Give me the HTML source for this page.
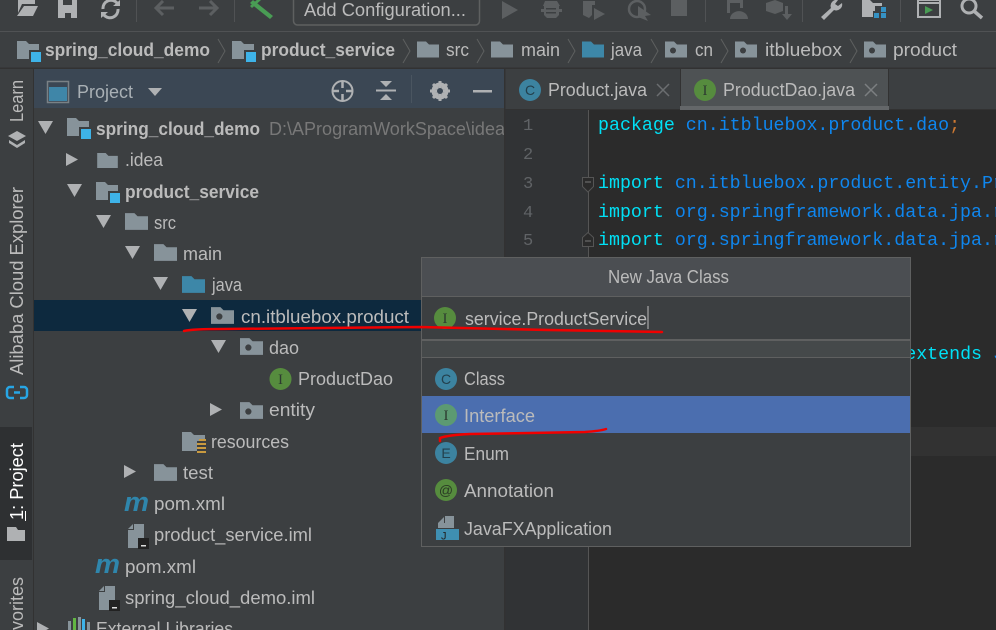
<!DOCTYPE html>
<html><head><meta charset="utf-8"><title>New Java Class</title>
<style>
html,body{margin:0;padding:0;width:996px;height:630px;overflow:hidden;background:#3c3f41}
svg{display:block}
text{font-family:"Liberation Sans",sans-serif;font-size:18px;fill:#bbbbbb}
.b{font-weight:bold}
.c{font-family:"Liberation Mono",monospace;font-size:18.3px}
.k{fill:#00e0f5}.n{fill:#0f86ee}
.ln{font-family:"Liberation Mono",monospace;font-size:17px;fill:#606366}
.g{font-family:"Liberation Serif",serif;font-size:15px;text-anchor:middle;fill:#2d3b30}
.gs{font-family:"Liberation Sans",sans-serif;font-size:14px;text-anchor:middle;fill:#23404d}
.m{font-weight:bold;font-style:italic;font-size:27px;fill:#2f86ac}
</style></head><body>
<svg width="996" height="630" viewBox="0 0 996 630" xmlns="http://www.w3.org/2000/svg">
<defs>
<symbol id="f" viewBox="0 0 22 16" overflow="visible"><path d="M0 0h9l3 3h10v13H0z" fill="#87939a"/></symbol>
<symbol id="fb" viewBox="0 0 22 16" overflow="visible"><path d="M0 0h9l3 3h10v13H0z" fill="#3d87a8"/></symbol>
<symbol id="p" viewBox="0 0 22 16" overflow="visible"><path d="M0 0h9l3 3h10v13H0z" fill="#87939a"/><circle cx="8" cy="9" r="3" fill="#3c3f41"/></symbol>
<symbol id="mod" viewBox="0 0 25 21" overflow="visible"><path d="M0 0h9l3 3h10v15H0z" fill="#87939a"/><rect x="12" y="9" width="13" height="13" fill="#3c3f41"/><rect x="14" y="11" width="10" height="10" fill="#3eb3e8"/></symbol>
<symbol id="d" viewBox="0 0 15 13" overflow="visible"><path d="M0 0h15L7.500 13z" fill="#afb1b3"/></symbol>
<symbol id="r" viewBox="0 0 12 13" overflow="visible"><path d="M0 0l12 6.500L0 13z" fill="#afb1b3"/></symbol>
<symbol id="iml" viewBox="0 0 21 24" overflow="visible"><path d="M6 0h10v17H10v7H0V6h6z" fill="#87939a"/><path d="M5 0v5H0z" fill="#87939a"/><rect x="10" y="14" width="11" height="11" fill="#222"/><rect x="13" y="21" width="5" height="1.500" fill="#ddd"/></symbol>
</defs>

<!-- base -->
<rect width="996" height="630" fill="#3c3f41"/>
<rect y="31" width="996" height="1" fill="#505254"/>
<rect y="67.500" width="996" height="1.500" fill="#323232"/>

<!-- toolbar -->
<path d="M18 0h17v4H22l-4 9z" fill="#afb1b3"/><path d="M24 6h14l-5 10H17z" fill="#afb1b3"/>
<path d="M58 0h19v18H58z" fill="#afb1b3"/><path d="M63 0h9v5h-9zM65 13h6v5h-6z" fill="#3c3f41"/>
<g fill="none" stroke="#afb1b3" stroke-width="3"><path d="M103 9a8 8 0 0 1 14-6M118 9a8 8 0 0 1-14 6"/></g>
<path d="M113 6h7V0zM108 12h-7v6z" fill="#afb1b3"/>
<rect x="136" y="0" width="1" height="22" fill="#505254"/>
<g fill="none" stroke="#5c5f61" stroke-width="3"><path d="M156 8h18M163 1l-7 7 7 7"/><path d="M199 8h18M210 1l7 7-7 7"/></g>
<rect x="234" y="0" width="1" height="22" fill="#505254"/>
<path d="M253 0l20 16-3 3-20-16zM250 6l9-8 2 2-9 8z" fill="#499c54"/>
<rect x="293.500" y="-6" width="186" height="31" rx="4" fill="none" stroke="#5e6060" stroke-width="1.500"/>
<text x="304" y="16" textLength="162" lengthAdjust="spacingAndGlyphs">Add Configuration...</text>
<path d="M502 1l16 9-16 9z" fill="#5c5f61"/>
<path d="M545 1h12l3 5h-1v3h3v3h-3v3l-3 3h-9l-3-3v-3h-3V9h3V6h-1z" fill="#5c5f61"/><path d="M546 8h10v1.500h-10zM546 12h10v1.500h-10z" fill="#3c3f41"/>
<path d="M583 1h12v4h-3v10l-3 3-6-3z" fill="#5c5f61"/><path d="M594 8l11 6-11 6z" fill="#5c5f61"/>
<circle cx="637" cy="9" r="8" fill="none" stroke="#5c5f61" stroke-width="2.500"/><path d="M638 6l13 9-6 1 3 5-10-4z" fill="#5c5f61"/>
<rect x="671" y="0" width="16" height="16" fill="#5c5f61"/>
<rect x="705" y="0" width="1" height="22" fill="#505254"/>
<path d="M727 0h16v8h-3V3h-10v10h-3z" fill="#5c5f61"/><path d="M730 19a8 7 0 0 1 18 0z" fill="#5c5f61"/>
<path d="M766 3l9-3 8 3v8l-8 3-9-3z" fill="#5c5f61"/><path d="M785 6h3v8h4l-5 6-5-6h3z" fill="#5c5f61"/>
<rect x="802" y="0" width="1" height="22" fill="#505254"/>
<path d="M838 0a6 6 0 0 0-7 8l-10 9 3 3 10-10a6 6 0 0 0 8-7l-4 3-3-2z" fill="#afb1b3"/>
<path d="M862 0h8l3 3h9v3h-7v5h-2v6h-11z" fill="#afb1b3"/><rect x="874" y="13" width="5" height="5" fill="#3592c4"/><rect x="881" y="13" width="5" height="5" fill="#3592c4"/><rect x="881" y="7" width="5" height="5" fill="#3592c4"/>
<rect x="900" y="0" width="1" height="22" fill="#505254"/>
<rect x="918" y="0" width="22" height="17" fill="none" stroke="#afb1b3" stroke-width="2"/><rect x="917" y="2" width="24" height="2" fill="#afb1b3"/><path d="M925 6l8 4-8 4z" fill="#499c54"/>
<circle cx="969" cy="6" r="7" fill="none" stroke="#afb1b3" stroke-width="3"/><path d="M974 11l8 7" stroke="#afb1b3" stroke-width="3.500" fill="none"/>

<!-- breadcrumbs -->
<use href="#mod" x="17" y="41" width="25" height="21"/>
<text class="b" x="45" y="56" textLength="165" lengthAdjust="spacingAndGlyphs">spring_cloud_demo</text>
<use href="#mod" x="232" y="41" width="25" height="21"/>
<text class="b" x="261" y="56" textLength="134" lengthAdjust="spacingAndGlyphs">product_service</text>
<use href="#f" x="417" y="41" width="22" height="17"/>
<text x="446" y="56" textLength="23" lengthAdjust="spacingAndGlyphs">src</text>
<use href="#f" x="491" y="41" width="22" height="17"/>
<text x="521" y="56" textLength="39" lengthAdjust="spacingAndGlyphs">main</text>
<use href="#fb" x="582" y="41" width="22" height="17"/>
<text x="611" y="56" textLength="31" lengthAdjust="spacingAndGlyphs">java</text>
<use href="#p" x="665" y="41" width="22" height="17"/>
<text x="695" y="56" textLength="18" lengthAdjust="spacingAndGlyphs">cn</text>
<use href="#p" x="735" y="41" width="22" height="17"/>
<text x="765" y="56" textLength="77" lengthAdjust="spacingAndGlyphs">itbluebox</text>
<use href="#p" x="864" y="41" width="22" height="17"/>
<text x="893" y="56" textLength="64" lengthAdjust="spacingAndGlyphs">product</text>
<g fill="none" stroke="#5e6060" stroke-width="1"><path d="M218 39l7 12-7 12M403 39l7 12-7 12M477 39l7 12-7 12M568 39l7 12-7 12M651 39l7 12-7 12M721 39l7 12-7 12M850 39l7 12-7 12"/></g>

<!-- left stripe -->
<rect x="33" y="69" width="1" height="561" fill="#323232"/>
<rect x="0" y="427" width="32" height="133" fill="#2e3032"/>
<text transform="translate(23 122) rotate(-90)" textLength="42" lengthAdjust="spacingAndGlyphs">Learn</text>
<path d="M17 131l9 5-9 5-9-5z" fill="#afb1b3"/><path d="M9 140l8 5 8-5v3l-8 5-8-5z" fill="#afb1b3"/>
<text transform="translate(23 375) rotate(-90)" textLength="188" lengthAdjust="spacingAndGlyphs">Alibaba Cloud Explorer</text>
<path d="M14 387h-4a3 3 0 0 0-3 3v5a3 3 0 0 0 3 3h4M20 387h4a3 3 0 0 1 3 3v5a3 3 0 0 1-3 3h-4M14 392.500h6" fill="none" stroke="#27a6e5" stroke-width="2.500"/>
<text transform="translate(23 520) rotate(-90)" textLength="77" lengthAdjust="spacingAndGlyphs" style="fill:#fff">1: Project</text>
<rect x="25" y="511" width="1" height="10" fill="#fff"/>
<path d="M7 527h9l2 3h7v11H7z" fill="#afb1b3"/>
<text transform="translate(23 640) rotate(-90)" textLength="63" lengthAdjust="spacingAndGlyphs">avorites</text>

<!-- project header -->
<rect x="34" y="69" width="471" height="39" fill="#3b4754"/>
<rect x="47.500" y="81.500" width="21" height="21" fill="none" stroke="#7a8186" stroke-width="1.500"/>
<rect x="49" y="87" width="18" height="14" fill="#3f86a8"/>
<text x="77" y="98" textLength="56" lengthAdjust="spacingAndGlyphs" style="fill:#a9b0b5">Project</text>
<path d="M148 88h14l-7 8z" fill="#afb1b3"/>
<circle cx="342.500" cy="91" r="10" fill="none" stroke="#afb1b3" stroke-width="2"/><path d="M342.500 81v7M342.500 94v7M332 91h7M346 91h7" stroke="#afb1b3" stroke-width="2.500"/>
<path d="M376 90.500h20" stroke="#afb1b3" stroke-width="2"/><path d="M380 81h12l-6 6zM380 100h12l-6-6z" fill="#afb1b3"/>
<rect x="411" y="75" width="1" height="28" fill="#4a5560"/>
<circle cx="440" cy="91" r="6.500" fill="none" stroke="#afb1b3" stroke-width="4"/>
<path d="M440 81v20M430 91h20M433 84l14 14M447 84l-14 14" stroke="#afb1b3" stroke-width="3"/><circle cx="440" cy="91" r="3" fill="#3b4754"/>
<rect x="473" y="90" width="19" height="2.500" fill="#afb1b3"/>

<!-- tree -->
<rect x="34" y="300" width="471" height="31" fill="#0d293e"/>
<use href="#d" x="38" y="121" width="15" height="13"/>
<use href="#mod" x="67" y="118" width="25" height="21"/>
<text class="b" x="96" y="135" textLength="164" lengthAdjust="spacingAndGlyphs">spring_cloud_demo</text>
<text x="269" y="135" textLength="236" lengthAdjust="spacingAndGlyphs" style="fill:#787878">D:\AProgramWorkSpace\idea</text>
<use href="#r" x="66" y="153" width="12" height="13"/>
<use href="#f" x="96" y="153" width="23" height="15"/>
<text x="125" y="166" textLength="38" lengthAdjust="spacingAndGlyphs">.idea</text>
<use href="#d" x="67" y="184" width="15" height="13"/>
<use href="#mod" x="96" y="182" width="25" height="21"/>
<text class="b" x="125" y="198" textLength="134" lengthAdjust="spacingAndGlyphs">product_service</text>
<use href="#d" x="96" y="215" width="15" height="13"/>
<use href="#f" x="125" y="213" width="23" height="17"/>
<text x="154" y="229" textLength="22" lengthAdjust="spacingAndGlyphs">src</text>
<use href="#d" x="125" y="246" width="15" height="13"/>
<use href="#f" x="154" y="244" width="23" height="17"/>
<text x="183" y="260" textLength="39" lengthAdjust="spacingAndGlyphs">main</text>
<use href="#d" x="153" y="277" width="15" height="13"/>
<use href="#fb" x="182" y="276" width="23" height="17"/>
<text x="212" y="291" textLength="30" lengthAdjust="spacingAndGlyphs">java</text>
<use href="#d" x="182" y="309" width="15" height="13"/>
<use href="#p" x="211" y="307" width="23" height="17"/>
<text x="241" y="323" textLength="168" lengthAdjust="spacingAndGlyphs">cn.itbluebox.product</text>
<use href="#d" x="211" y="340" width="15" height="13"/>
<use href="#p" x="240" y="338" width="23" height="17"/>
<text x="269" y="354" textLength="30" lengthAdjust="spacingAndGlyphs">dao</text>
<circle cx="280.500" cy="379" r="11" fill="#568c3e"/><text class="g" x="280.500" y="384">I</text>
<text x="298" y="385" textLength="95" lengthAdjust="spacingAndGlyphs">ProductDao</text>
<use href="#r" x="210" y="403" width="12" height="13"/>
<use href="#p" x="240" y="402" width="23" height="17"/>
<text x="269" y="416" textLength="46" lengthAdjust="spacingAndGlyphs">entity</text>
<path d="M182 432h9l3 3h11v6h-8v10h-15z" fill="#87939a"/><g fill="#c99a3f"><rect x="197" y="443" width="9" height="2"/><rect x="197" y="447" width="9" height="2"/><rect x="197" y="451" width="9" height="2"/><rect x="199" y="439" width="7" height="2"/></g>
<text x="211" y="448" textLength="78" lengthAdjust="spacingAndGlyphs">resources</text>
<use href="#r" x="124" y="465" width="12" height="13"/>
<use href="#f" x="154" y="464" width="23" height="17"/>
<text x="183" y="479" textLength="30" lengthAdjust="spacingAndGlyphs">test</text>
<text class="m" x="124" y="511" textLength="25" lengthAdjust="spacingAndGlyphs">m</text>
<text x="154" y="510" textLength="71" lengthAdjust="spacingAndGlyphs">pom.xml</text>
<use href="#iml" x="128" y="524" width="21" height="24"/>
<text x="154" y="541" textLength="158" lengthAdjust="spacingAndGlyphs">product_service.iml</text>
<text class="m" x="95" y="573" textLength="25" lengthAdjust="spacingAndGlyphs">m</text>
<text x="125" y="573" textLength="71" lengthAdjust="spacingAndGlyphs">pom.xml</text>
<use href="#iml" x="99" y="586" width="21" height="24"/>
<text x="125" y="604" textLength="190" lengthAdjust="spacingAndGlyphs">spring_cloud_demo.iml</text>
<use href="#r" x="37" y="622" width="12" height="13"/>
<g><rect x="68" y="621" width="3" height="9" fill="#87939a"/><rect x="73" y="618" width="3" height="12" fill="#62b543"/><rect x="78" y="617" width="3" height="13" fill="#87939a"/><rect x="82" y="619" width="3" height="11" fill="#3eb3e8"/><rect x="87" y="622" width="3" height="8" fill="#87939a"/></g>
<text x="96" y="635" textLength="137" lengthAdjust="spacingAndGlyphs">External Libraries</text>

<!-- editor -->
<rect x="505" y="110" width="491" height="520" fill="#2b2b2b"/>
<rect x="505" y="110" width="83" height="520" fill="#313335"/>
<rect x="505" y="69" width="491" height="41" fill="#3c3f41"/>
<rect x="504" y="69" width="1.500" height="561" fill="#323232"/>
<rect x="588" y="110" width="1" height="520" fill="#555555"/>
<rect x="589" y="427" width="407" height="29" fill="#323232"/>
<rect x="505" y="109" width="491" height="1" fill="#323232"/>
<rect x="680" y="69" width="208" height="37" fill="#4e5254"/>
<rect x="680" y="106" width="209" height="4" fill="#646769"/>
<rect x="680" y="69" width="1" height="37" fill="#323232"/><rect x="888" y="69" width="1" height="37" fill="#323232"/>
<circle cx="530" cy="90" r="11" fill="#3c83a0"/><text class="gs" x="530" y="95">C</text>
<text x="548" y="96" textLength="99" lengthAdjust="spacingAndGlyphs">Product.java</text>
<path d="M657 84l12 12M669 84l-12 12" stroke="#6b6e70" stroke-width="1.500"/>
<circle cx="705" cy="90" r="11" fill="#568c3e"/><text class="g" x="705" y="95">I</text>
<text x="723" y="96" textLength="132" lengthAdjust="spacingAndGlyphs">ProductDao.java</text>
<path d="M865 84l12 12M877 84l-12 12" stroke="#7c7f81" stroke-width="1.500"/>

<text class="ln" x="523" y="130">1</text><text class="ln" x="523" y="159">2</text><text class="ln" x="523" y="188">3</text><text class="ln" x="523" y="217">4</text><text class="ln" x="523" y="245">5</text>
<path d="M582.500 177.500h11v9l-5.500 5.500-5.500-5.500z" fill="#2b2b2b" stroke="#555"/><path d="M585 182h6" stroke="#777"/>
<path d="M582.500 246.500h11v-9l-5.500-5-5.500 5z" fill="#2b2b2b" stroke="#555"/><path d="M585 241h6" stroke="#777"/>
<text class="c" x="598" y="130"><tspan class="k">package</tspan> <tspan class="n">cn.itbluebox.product.dao</tspan><tspan style="fill:#cc7832">;</tspan></text>
<text class="c" x="598" y="188"><tspan class="k">import</tspan> <tspan class="n">cn.itbluebox.product.entity.Product</tspan></text>
<text class="c" x="598" y="217"><tspan class="k">import</tspan> <tspan class="n">org.springframework.data.jpa.repository</tspan></text>
<text class="c" x="598" y="245"><tspan class="k">import</tspan> <tspan class="n">org.springframework.data.jpa.repository</tspan></text>
<text class="c" x="598" y="359"><tspan class="k">public interface</tspan> <tspan class="n">ProductDao</tspan> <tspan class="k">extends</tspan> <tspan class="n">JpaRepository</tspan></text>

<!-- dialog -->
<rect x="421.500" y="257.500" width="489" height="289" fill="#3c3f41" stroke="#5f6060"/>
<rect x="422" y="258" width="488" height="38" fill="#4b4e52"/>
<rect x="422" y="296" width="488" height="1" fill="#5f6060"/>
<rect x="422" y="339" width="488" height="2" fill="#5f6060"/>
<rect x="422" y="341" width="488" height="16" fill="#45494a"/>
<rect x="422" y="357" width="488" height="1" fill="#5f6060"/>
<rect x="422" y="396" width="488" height="37" fill="#4b6eaf"/>
<text x="608" y="283" textLength="121" lengthAdjust="spacingAndGlyphs">New Java Class</text>
<circle cx="445" cy="318" r="11" fill="#568c3e"/><text class="g" x="445" y="323">I</text>
<text x="465" y="325" textLength="182" lengthAdjust="spacingAndGlyphs">service.ProductService</text>
<rect x="647.500" y="306" width="1" height="23" fill="#bbbbbb"/>
<circle cx="446" cy="379" r="11" fill="#3c83a0"/><text class="gs" x="446" y="384">C</text>
<text x="464" y="385" textLength="41" lengthAdjust="spacingAndGlyphs">Class</text>
<circle cx="446" cy="415" r="11" fill="#5c9a72"/><text class="g" x="446" y="420">I</text>
<text x="464" y="422" textLength="71" lengthAdjust="spacingAndGlyphs">Interface</text>
<circle cx="446" cy="453" r="11" fill="#3c83a0"/><text class="gs" x="446" y="458">E</text>
<text x="464" y="460" textLength="45" lengthAdjust="spacingAndGlyphs">Enum</text>
<circle cx="446" cy="490" r="11" fill="#568c3e"/><text class="gs" x="446" y="495" style="fill:#2a3a24">@</text>
<text x="464" y="497" textLength="90" lengthAdjust="spacingAndGlyphs">Annotation</text>
<path d="M445 516h9v12h-16v-5h7z" fill="#87939a"/><path d="M444 517v6h-6z" fill="#87939a"/><rect x="436" y="529" width="23" height="11" fill="#3f8fb2"/>
<text x="441" y="539.500" style="font-size:11px;fill:#222">J</text>
<text x="464" y="535" textLength="148" lengthAdjust="spacingAndGlyphs">JavaFXApplication</text>

<!-- red annotations -->
<g fill="none" stroke="#f00000" stroke-width="2.500" stroke-linecap="round">
<path d="M184 331q8-2 40-2l196-2 128 3 114 2"/>
<path d="M440 441v-3q8-3 30-4l60-1 55-1q15-1 21-3"/>
</g>
</svg>
</body></html>
